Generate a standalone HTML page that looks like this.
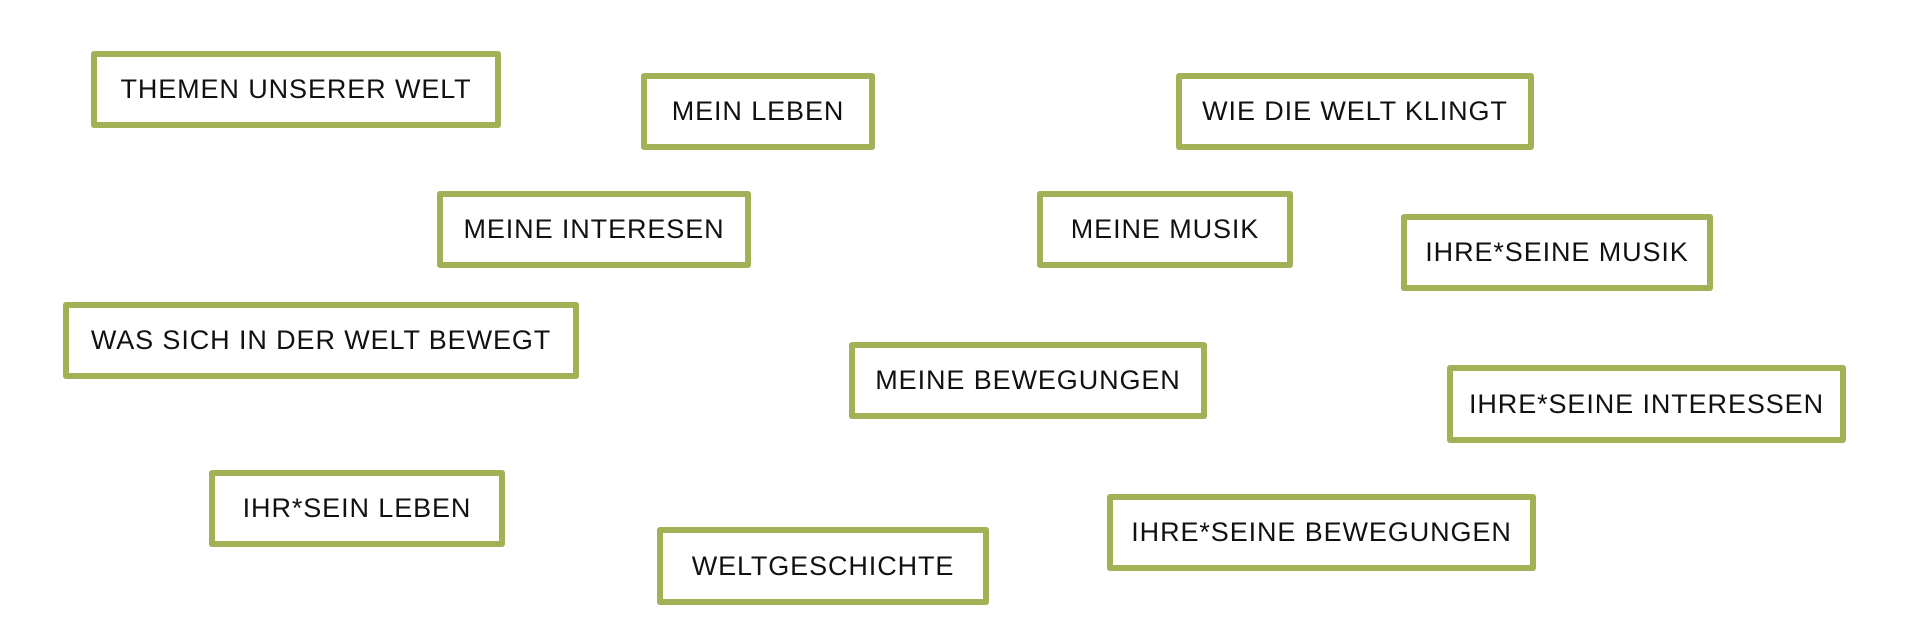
<!DOCTYPE html>
<html><head><meta charset="utf-8"><style>
html,body{margin:0;padding:0;background:#fff;}
body{width:1908px;height:640px;position:relative;overflow:hidden;font-family:"Liberation Sans",sans-serif;}
.b{position:absolute;box-sizing:border-box;border:6px solid #a0b255;border-radius:3px;display:flex;align-items:center;justify-content:center;font-size:27px;letter-spacing:0.9px;color:#111;white-space:nowrap;background:#fff;}
</style></head><body>
<div class="b" style="left:91px;top:51px;width:410px;height:77px">THEMEN UNSERER WELT</div>
<div class="b" style="left:641px;top:73px;width:234px;height:77px">MEIN LEBEN</div>
<div class="b" style="left:1176px;top:73px;width:358px;height:77px">WIE DIE WELT KLINGT</div>
<div class="b" style="left:437px;top:191px;width:314px;height:77px">MEINE INTERESEN</div>
<div class="b" style="left:1037px;top:191px;width:256px;height:77px">MEINE MUSIK</div>
<div class="b" style="left:1401px;top:214px;width:312px;height:77px">IHRE*SEINE MUSIK</div>
<div class="b" style="left:63px;top:302px;width:516px;height:77px">WAS SICH IN DER WELT BEWEGT</div>
<div class="b" style="left:849px;top:342px;width:358px;height:77px">MEINE BEWEGUNGEN</div>
<div class="b" style="left:1447px;top:365px;width:399px;height:78px">IHRE*SEINE INTERESSEN</div>
<div class="b" style="left:209px;top:470px;width:296px;height:77px">IHR*SEIN LEBEN</div>
<div class="b" style="left:657px;top:527px;width:332px;height:78px">WELTGESCHICHTE</div>
<div class="b" style="left:1107px;top:494px;width:429px;height:77px">IHRE*SEINE BEWEGUNGEN</div>
</body></html>
